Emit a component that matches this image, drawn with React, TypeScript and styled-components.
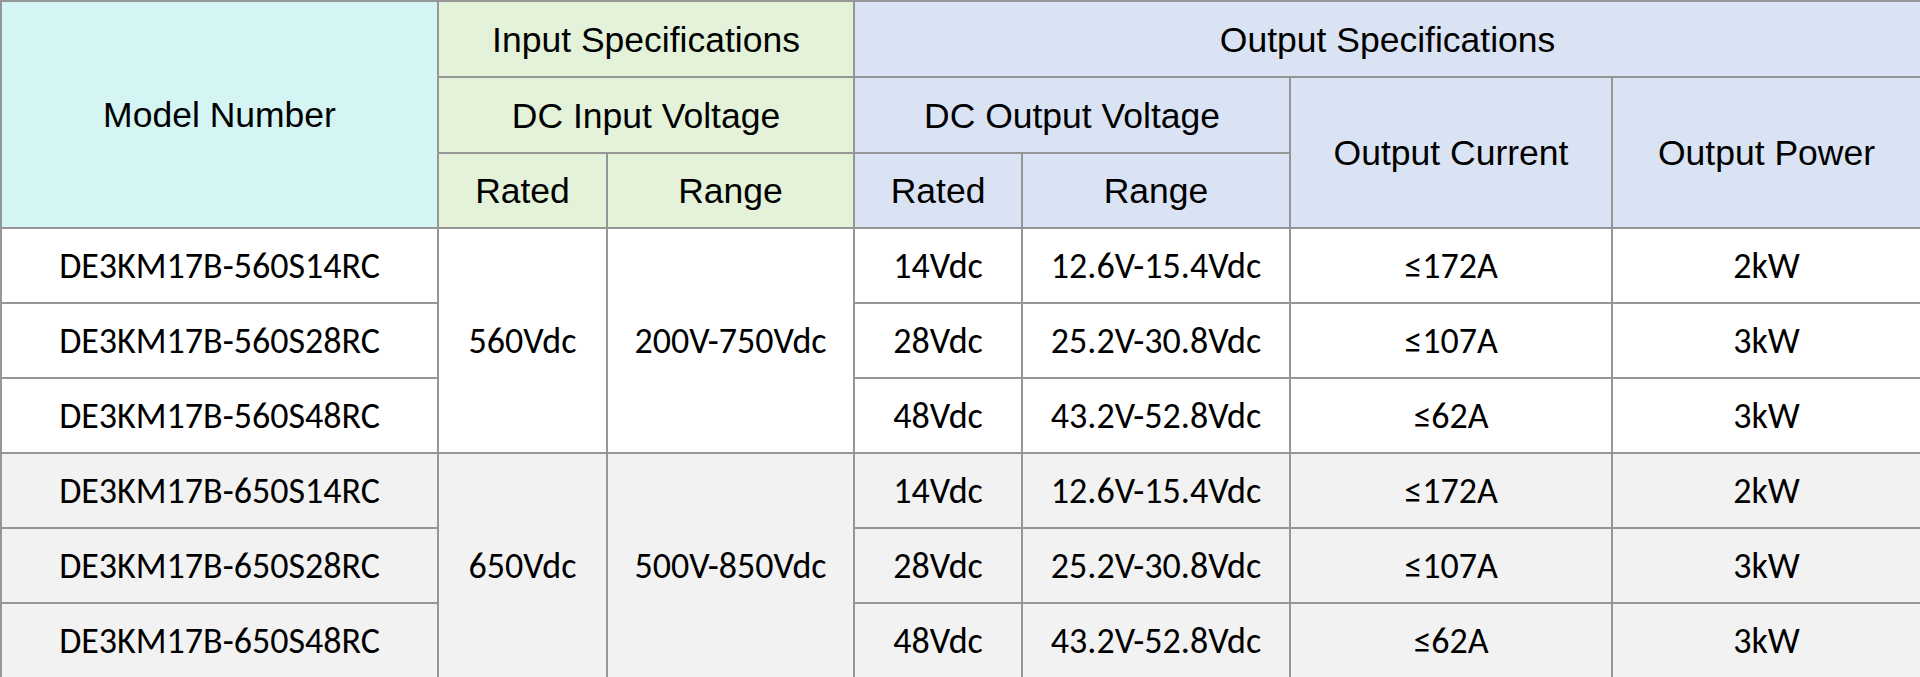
import React from "react";
import styled, { createGlobalStyle } from "styled-components";

const Global = createGlobalStyle`
  html, body { margin: 0; padding: 0; background: #ffffff; }
  #root { width: 1920px; }
`;

const Table = styled.table`
  width: 1920px;
  height: 677px;
  border-collapse: collapse;
  table-layout: fixed;
  border: 2px solid #969696;
`;

const Row = styled.tr<{ $h: number }>`
  height: ${(p) => p.$h}px;
`;

type Tone = "model" | "input" | "output" | "white" | "gray";

const tones: Record<Tone, string> = {
  model: "#d4f5f3",
  input: "#e3f2d9",
  output: "#dae3f3",
  white: "#ffffff",
  gray: "#f2f2f2",
};

const Head = styled.th<{ $tone: Tone }>`
  background: ${(p) => tones[p.$tone]};
  border: 2px solid #969696;
  padding: 2px 0 0;
  font-family: "Liberation Sans", Arial, sans-serif;
  font-weight: 400;
  font-size: 35.5px;
  color: #000;
  text-align: center;
  vertical-align: middle;
  white-space: nowrap;
`;

const Cell = styled.td<{ $tone: Tone }>`
  background: ${(p) => tones[p.$tone]};
  border: 2px solid #969696;
  padding: 0;
  font-family: Carlito, Lato, "Open Sans", sans-serif;
  font-size: 36px;
  color: #000;
  text-align: center;
  vertical-align: middle;
  white-space: nowrap;
`;

const widths = [437, 169, 247, 168, 268, 322, 309];

type Group = {
  tone: Tone;
  inRated: string;
  inRange: string;
  rows: { model: string; rated: string; range: string; cur: string; pow: string }[];
};

const groups: Group[] = [
  {
    tone: "white",
    inRated: "560Vdc",
    inRange: "200V-750Vdc",
    rows: [
      { model: "DE3KM17B-560S14RC", rated: "14Vdc", range: "12.6V-15.4Vdc", cur: "≤172A", pow: "2kW" },
      { model: "DE3KM17B-560S28RC", rated: "28Vdc", range: "25.2V-30.8Vdc", cur: "≤107A", pow: "3kW" },
      { model: "DE3KM17B-560S48RC", rated: "48Vdc", range: "43.2V-52.8Vdc", cur: "≤62A", pow: "3kW" },
    ],
  },
  {
    tone: "gray",
    inRated: "650Vdc",
    inRange: "500V-850Vdc",
    rows: [
      { model: "DE3KM17B-650S14RC", rated: "14Vdc", range: "12.6V-15.4Vdc", cur: "≤172A", pow: "2kW" },
      { model: "DE3KM17B-650S28RC", rated: "28Vdc", range: "25.2V-30.8Vdc", cur: "≤107A", pow: "3kW" },
      { model: "DE3KM17B-650S48RC", rated: "48Vdc", range: "43.2V-52.8Vdc", cur: "≤62A", pow: "3kW" },
    ],
  },
];

export default function App() {
  return (
    <>
      <Global />
      <Table>
        <colgroup>
          {widths.map((w, i) => (
            <col key={i} style={{ width: w }} />
          ))}
        </colgroup>
        <thead>
          <Row $h={76}>
            <Head $tone="model" rowSpan={3}>Model Number</Head>
            <Head $tone="input" colSpan={2}>Input Specifications</Head>
            <Head $tone="output" colSpan={4}>Output Specifications</Head>
          </Row>
          <Row $h={76}>
            <Head $tone="input" colSpan={2}>DC Input Voltage</Head>
            <Head $tone="output" colSpan={2}>DC Output Voltage</Head>
            <Head $tone="output" rowSpan={2}>Output Current</Head>
            <Head $tone="output" rowSpan={2}>Output Power</Head>
          </Row>
          <Row $h={75}>
            <Head $tone="input">Rated</Head>
            <Head $tone="input">Range</Head>
            <Head $tone="output">Rated</Head>
            <Head $tone="output">Range</Head>
          </Row>
        </thead>
        <tbody>
          {groups.map((g) =>
            g.rows.map((r, i) => (
              <Row $h={75} key={r.model}>
                <Cell $tone={g.tone}>{r.model}</Cell>
                {i === 0 && (
                  <>
                    <Cell $tone={g.tone} rowSpan={3}>{g.inRated}</Cell>
                    <Cell $tone={g.tone} rowSpan={3}>{g.inRange}</Cell>
                  </>
                )}
                <Cell $tone={g.tone}>{r.rated}</Cell>
                <Cell $tone={g.tone}>{r.range}</Cell>
                <Cell $tone={g.tone}>{r.cur}</Cell>
                <Cell $tone={g.tone}>{r.pow}</Cell>
              </Row>
            ))
          )}
        </tbody>
      </Table>
    </>
  );
}
